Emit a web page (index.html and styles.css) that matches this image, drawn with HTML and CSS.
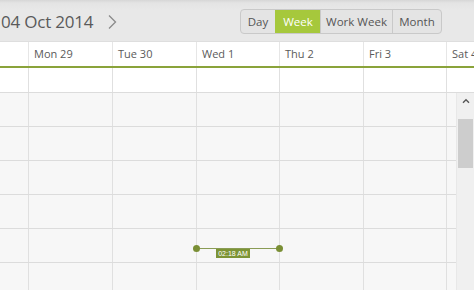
FILE: index.html
```html
<!DOCTYPE html>
<html>
<head>
<meta charset="utf-8">
<link rel="stylesheet" href="styles.css">
</head>
<body>
<div class="sched">
  <div class="toolbar">
    <span class="date">04 Oct 2014</span>
    <svg class="next" width="10" height="16" viewBox="0 0 10 16"><path d="M2 1.5 L8.5 8 L2 14.5" fill="none" stroke="#8a8a8a" stroke-width="1.3"/></svg>
    <div class="views">
      <span class="view v-day">Day</span>
      <span class="view v-week active">Week</span>
      <span class="view v-ww">Work Week</span>
      <span class="view v-month">Month</span>
    </div>
  </div>
  <div class="grid header">
    <div class="cell"></div>
    <div class="cell">Mon 29</div>
    <div class="cell">Tue 30</div>
    <div class="cell">Wed 1</div>
    <div class="cell">Thu 2</div>
    <div class="cell">Fri 3</div>
    <div class="cell">Sat 4</div>
  </div>
  <div class="grid allday">
    <div class="cell"></div><div class="cell"></div><div class="cell"></div><div class="cell"></div><div class="cell"></div><div class="cell"></div><div class="cell"></div>
  </div>
  <div class="body">
    <div class="rows">
      <div class="grid row"><div class="cell"></div><div class="cell"></div><div class="cell"></div><div class="cell"></div><div class="cell"></div><div class="cell"></div><div class="cell"></div></div>
      <div class="grid row"><div class="cell"></div><div class="cell"></div><div class="cell"></div><div class="cell"></div><div class="cell"></div><div class="cell"></div><div class="cell"></div></div>
      <div class="grid row"><div class="cell"></div><div class="cell"></div><div class="cell"></div><div class="cell"></div><div class="cell"></div><div class="cell"></div><div class="cell"></div></div>
      <div class="grid row"><div class="cell"></div><div class="cell"></div><div class="cell"></div><div class="cell"></div><div class="cell"></div><div class="cell"></div><div class="cell"></div></div>
      <div class="grid row"><div class="cell"></div><div class="cell"></div><div class="cell"></div><div class="cell"></div><div class="cell"></div><div class="cell"></div><div class="cell"></div></div>
      <div class="grid row"><div class="cell"></div><div class="cell"></div><div class="cell"></div><div class="cell"></div><div class="cell"></div><div class="cell"></div><div class="cell"></div></div>
      <div class="event">
        <span class="dot dot-l"></span>
        <span class="dot dot-r"></span>
        <span class="ev-label">02:18 AM</span>
      </div>
    </div>
    <div class="scrollbar">
      <svg class="up" width="8" height="6" viewBox="0 0 8 6"><path d="M1 4.8 L4 1.8 L7 4.8" fill="none" stroke="#555" stroke-width="1.4"/></svg>
      <div class="thumb"></div>
    </div>
  </div>
</div>
</body>
</html>
```

FILE: styles.css
```css
html, body {
  margin: 0;
  padding: 0;
  background: #f7f7f7;
}
.sched {
  width: 474px;
  height: 290px;
  overflow: hidden;
  font-family: "Open Sans", "Noto Sans", sans-serif;
  color: #555;
}
.toolbar {
  height: 42px;
  box-sizing: border-box;
  display: flex;
  align-items: center;
  background: linear-gradient(#d6d6d6 0px, #e4e4e4 3px, #e8e8e8 10px, #e8e8e8 100%);
  border-bottom: 1px solid #dedede;
}
.date {
  font-size: 17px;
  letter-spacing: -0.2px;
  color: #5a5a5a;
  margin-left: 1px;
  margin-top: 2px;
  width: 106px;
}
.next {
  margin-top: 2px;
}
.views {
  margin-left: auto;
  margin-right: 32px;
  display: flex;
  height: 25px;
  box-sizing: border-box;
  border: 1px solid #c9c9c9;
  border-radius: 4px;
  background: #e4e4e4;
  overflow: hidden;
  margin-top: 1px;
}
.view {
  display: flex;
  align-items: center;
  justify-content: center;
  font-size: 11.5px;
  color: #555;
  border-left: 1px solid #c9c9c9;
}
.v-day { width: 34px; border-left: none; }
.v-week { width: 44px; }
.v-ww { width: 71px; }
.v-month { width: 48px; }
.view.active {
  background: #a6c83c;
  color: #fff;
  border-left-color: #a6c83c;
}
.grid {
  display: grid;
  grid-template-columns: 28px 84px 84px 83px 84px 83px 1fr;
}
.grid .cell + .cell {
  border-left: 1px solid #e0e0e0;
}
.header {
  height: 24px;
  background: #fff;
  border-bottom: 2px solid #8aa33a;
}
.header .cell {
  font-size: 11px;
  line-height: 23px;
  padding-left: 5px;
  color: #5a5a5a;
  white-space: nowrap;
  overflow: hidden;
}
.header .cell + .cell {
  border-left-color: #e6e6e6;
}
.allday {
  height: 25px;
  box-sizing: border-box;
  background: #fff;
  border-bottom: 1px solid #dcdcdc;
}
.body {
  display: flex;
}
.rows {
  flex: 1;
  position: relative;
}
.row {
  height: 34px;
  box-sizing: border-box;
  border-bottom: 1px solid #dcdcdc;
  background: #f7f7f7;
}
.scrollbar {
  width: 17px;
  flex: none;
  height: 197px;
  background: #f0f0f0;
  border-left: 1px solid #e8e8e8;
  display: flex;
  flex-direction: column;
  align-items: center;
}
.up {
  margin-top: 5px;
}
.thumb {
  margin-top: 15px;
  width: 15px;
  height: 49px;
  background: #cdcdcd;
}
.event {
  position: absolute;
  left: 196px;
  top: 155px;
  width: 83px;
  height: 1px;
  background: #8a9c55;
}
.dot {
  position: absolute;
  top: -3px;
  width: 7px;
  height: 7px;
  border-radius: 50%;
  background: #7a8f35;
}
.dot-l { left: -3px; }
.dot-r { right: -4px; }
.ev-label {
  position: absolute;
  left: 20px;
  top: 1px;
  height: 9px;
  width: 34px;
  background: #7d9436;
  color: #fff;
  font-size: 7px;
  line-height: 9px;
  text-align: center;
  font-family: "Liberation Sans", sans-serif;
}
```
